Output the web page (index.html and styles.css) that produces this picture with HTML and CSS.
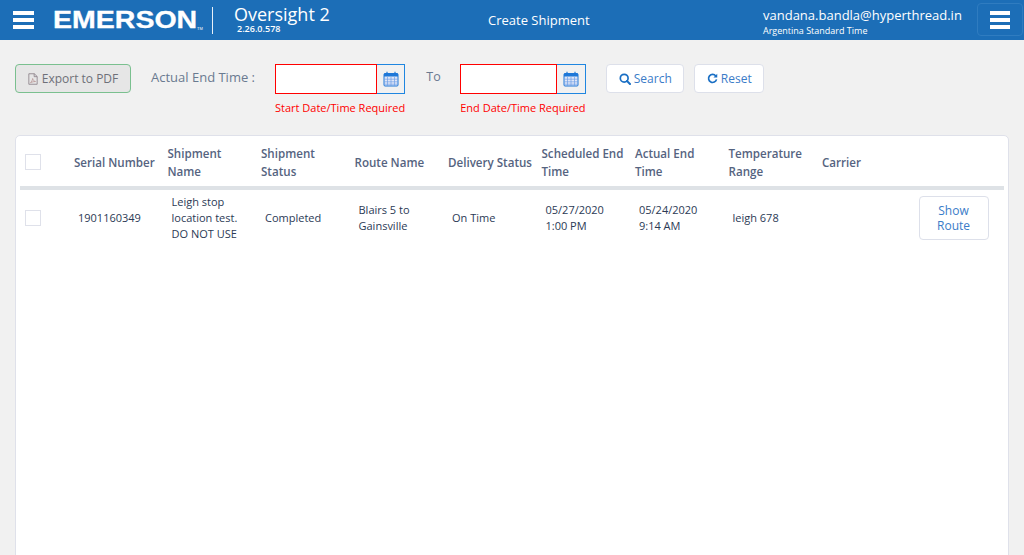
FILE: index.html
```html
<!DOCTYPE html>
<html lang="en">
<head>
<meta charset="utf-8">
<title>Oversight 2</title>
<link rel="stylesheet" href="styles.css">
</head>
<body>
<header class="topbar">
  <button class="burger burger-left" aria-label="Menu"><span></span><span></span><span></span></button>
  <div class="logo"><span class="logo-word">EMERSON</span><small>TM</small></div>
  <div class="product">
    <div class="product-name">Oversight 2</div>
    <div class="product-version">2.26.0.578</div>
  </div>
  <div class="create">Create Shipment</div>
  <div class="user">
    <div class="user-mail">vandana.bandla@hyperthread.in</div>
    <div class="user-zone">Argentina Standard Time</div>
  </div>
  <button class="burger burger-right" aria-label="Menu"><span></span><span></span><span></span></button>
</header>

<main class="content">
  <section class="filters">
    <button class="export">
      <svg class="pdf-icon" viewBox="0 0 12 14" width="10" height="12"><path d="M1 .7h6.6L11 4v9.3H1z M7.4.7v3.5H11" fill="none" stroke="#8a8088" stroke-width="1"/><path d="M3 11.4c1.2-1 2.3-3 2.6-5 .5 2 1.5 3.2 3.4 3.6-1.9 0-4 .4-6 1.4z" fill="none" stroke="#b08a8a" stroke-width=".8"/></svg>
      Export to PDF
    </button>
    <label class="filter-label">Actual End Time :</label>
    <div class="date-field date-start">
      <div class="date-row">
        <input class="date-input" type="text">
        <span class="cal">
          <svg viewBox="0 0 16 16" width="16" height="16"><use href="#calendar"/></svg>
        </span>
      </div>
      <div class="err">Start Date/Time Required</div>
    </div>
    <span class="to">To</span>
    <div class="date-field date-end">
      <div class="date-row">
        <input class="date-input" type="text">
        <span class="cal">
          <svg viewBox="0 0 16 16" width="16" height="16"><use href="#calendar"/></svg>
        </span>
      </div>
      <div class="err">End Date/Time Required</div>
    </div>
    <button class="action action-search">
      <svg viewBox="0 0 12 12" width="12" height="12"><circle cx="5.2" cy="5.2" r="3.9" fill="none" stroke="#1a6fc4" stroke-width="1.7"/><path d="M8 8l3 3" stroke="#1a6fc4" stroke-width="2" stroke-linecap="round"/></svg>
      Search
    </button>
    <button class="action action-reset">
      <svg viewBox="0 0 12 12" width="11" height="11"><path d="M9.6 3.2A4.4 4.4 0 1 0 10.4 7" fill="none" stroke="#1a6fc4" stroke-width="1.8"/><path d="M11.2.8v4.2H7z" fill="#1a6fc4"/></svg>
      Reset
    </button>
  </section>

  <section class="card">
    <table class="grid">
      <colgroup>
        <col class="c-check"><col class="c-data"><col class="c-data"><col class="c-data"><col class="c-data"><col class="c-data"><col class="c-data"><col class="c-data"><col class="c-data"><col class="c-data"><col>
      </colgroup>
      <thead>
        <tr>
          <th class="check-cell"><span class="check"></span></th>
          <th>Serial Number</th>
          <th>Shipment Name</th>
          <th>Shipment Status</th>
          <th>Route Name</th>
          <th>Delivery Status</th>
          <th>Scheduled End Time</th>
          <th>Actual End Time</th>
          <th>Temperature Range</th>
          <th>Carrier</th>
          <th></th>
        </tr>
      </thead>
      <tbody>
        <tr>
          <td class="check-cell"><span class="check"></span></td>
          <td>1901160349</td>
          <td>Leigh stop location test. DO NOT USE</td>
          <td>Completed</td>
          <td>Blairs 5 to Gainsville</td>
          <td>On Time</td>
          <td>05/27/2020<br>1:00 PM</td>
          <td>05/24/2020<br>9:14 AM</td>
          <td>leigh 678</td>
          <td></td>
          <td class="route-cell"><button class="route">Show Route</button></td>
        </tr>
      </tbody>
    </table>
  </section>
</main>

<svg class="defs" width="0" height="0" aria-hidden="true">
  <symbol id="calendar" viewBox="0 0 16 16">
    <rect x="1" y="2.5" width="14" height="12.5" rx="1" fill="#dfe6f7" stroke="#1f78d8" stroke-width="1"/>
    <rect x="1" y="2.5" width="14" height="3" fill="#1f78d8"/>
    <path d="M4 .8v3M12 .8v3" stroke="#1f78d8" stroke-width="1.2"/>
    <path d="M1 8.2h14M1 10.8h14M1 13.2h14M4.5 6v9M8 6v9M11.5 6v9" stroke="#6f9fe6" stroke-width=".7"/>
  </symbol>
</svg>
</body>
</html>
```
FILE: styles.css
```css
* { box-sizing: border-box; }
html, body { height: 100%; }
body {
  margin: 0;
  height: 555px;
  overflow: hidden;
  background: #f1f1f1;
  font-family: "Open Sans", "Noto Sans", sans-serif;
  color: #2b3a55;
}
button { font-family: inherit; cursor: pointer; }

.topbar {
  display: flex;
  align-items: center;
  height: 40px;
  background: #1c6eb7;
  color: #fff;
}
.burger {
  display: flex;
  flex-direction: column;
  justify-content: center;
  gap: 3px;
  padding: 0;
  background: none;
  border: 0;
}
.burger span { display: block; height: 4px; background: #fff; }
.burger-left { width: 21px; margin-left: 13px; }
.burger-right {
  width: 46px;
  height: 33px;
  margin-top: 3px;
  padding: 0 12px;
  border: 1px solid #2f7cc0;
  border-radius: 4px;
  align-self: flex-start;
}

.logo {
  position: relative;
  width: 160px;
  margin-left: 19px;
  height: 27px;
  line-height: 26px;
  border-right: 1px solid #e8f0f8;
  font-family: "Liberation Sans", Arial, sans-serif;
  font-weight: 700;
  font-size: 23px;
}
.logo-word {
  display: inline-block;
  transform: scaleX(1.24);
  transform-origin: left center;
  -webkit-text-stroke: .3px #fff;
}
.logo small {
  position: absolute;
  left: 144px;
  top: 19px;
  font-size: 4px;
  line-height: 5px;
  font-weight: 400;
}
.product { margin-left: 21px; width: 254px; }
.product-name { font-size: 18px; line-height: 18px; }
.product-version { font-size: 9px; font-weight: 600; line-height: 12px; margin-left: 3px; }
.create { width: 275px; font-size: 13px; font-weight: 400; margin-top: -1px; }
.user { width: 214px; }
.user-mail { font-size: 13px; line-height: 18px; margin-top: 2px; white-space: nowrap; }
.user-zone { font-size: 9px; line-height: 12px; margin-top: 1px; white-space: nowrap; }

.content { padding: 0 15px; }

.filters {
  display: flex;
  align-items: flex-start;
  height: 95px;
  padding-top: 24px;
}
.export {
  display: flex;
  align-items: center;
  justify-content: center;
  gap: 4px;
  width: 116px;
  height: 29px;
  padding: 0;
  background: #e6e6e6;
  border: 1px solid #7ac08f;
  border-radius: 4px;
  color: #6e7078;
  font-size: 12px;
}
.filter-label {
  margin-left: 20px;
  width: 124px;
  padding-top: 4px;
  font-size: 13px;
  line-height: 18px;
  color: #6a7a90;
}
.date-row { display: flex; height: 30px; }
.date-input {
  height: 30px;
  padding: 0;
  background: #fff;
  border: 1px solid #f00;
  border-radius: 0;
  outline: 0;
}
.date-start .date-input { width: 102px; }
.date-end .date-input { width: 97px; }
.cal {
  display: flex;
  align-items: center;
  justify-content: center;
  height: 30px;
  border: 1px solid #1f86e0;
  border-left-width: 0;
}
.date-start .cal { width: 28px; }
.date-end .cal { width: 29px; }
.err {
  margin-top: 6px;
  font-size: 11px;
  line-height: 16px;
  color: #f00;
  white-space: nowrap;
}
.to {
  width: 55px;
  padding: 4px 0 0 21px;
  font-size: 12.5px;
  line-height: 18px;
  color: #6a7a90;
}
.action {
  display: flex;
  align-items: center;
  justify-content: center;
  gap: 3px;
  height: 29px;
  padding: 0;
  background: #fff;
  border: 1px solid #dde0ea;
  border-radius: 4px;
  color: #3a7cc8;
  font-size: 12px;
}
.action-search { width: 78px; margin-left: 20px; }
.action-reset { width: 70px; margin-left: 10px; }

.card {
  height: 430px;
  padding: 0 4px;
  background: #fff;
  border: 1px solid #dfe1ea;
  border-radius: 5px 5px 0 0;
}
.grid {
  width: 100%;
  table-layout: fixed;
  border-collapse: collapse;
}
.c-check { width: 47px; }
.c-data { width: 93.5px; }
.grid th {
  height: 52px;
  padding: 4px 0 0 7px;
  border-bottom: 4px solid #dee2e6;
  text-align: left;
  vertical-align: middle;
  font-size: 11.6px;
  font-weight: 600;
  line-height: 18px;
  color: #556380;
}
.grid td {
  height: 58px;
  padding: 0 7px 0 11px;
  font-size: 11px;
  line-height: 16px;
  color: #2b3a55;
  vertical-align: middle;
}
.grid .check-cell { padding: 0 0 0 5px; }
.grid th.check-cell { padding-top: 2px; }
.check {
  display: block;
  width: 16px;
  height: 16px;
  background: #fff;
  border: 1px solid #dfe1ea;
}
.grid .route-cell { padding: 0; }
.route {
  display: block;
  width: 70px;
  height: 44px;
  margin-left: 10px;
  padding: 0 12px;
  background: #fff;
  border: 1px solid #dde0ea;
  border-radius: 4px;
  color: #3a7cc8;
  font-size: 12px;
  line-height: 15px;
}
.defs { position: absolute; }
```
